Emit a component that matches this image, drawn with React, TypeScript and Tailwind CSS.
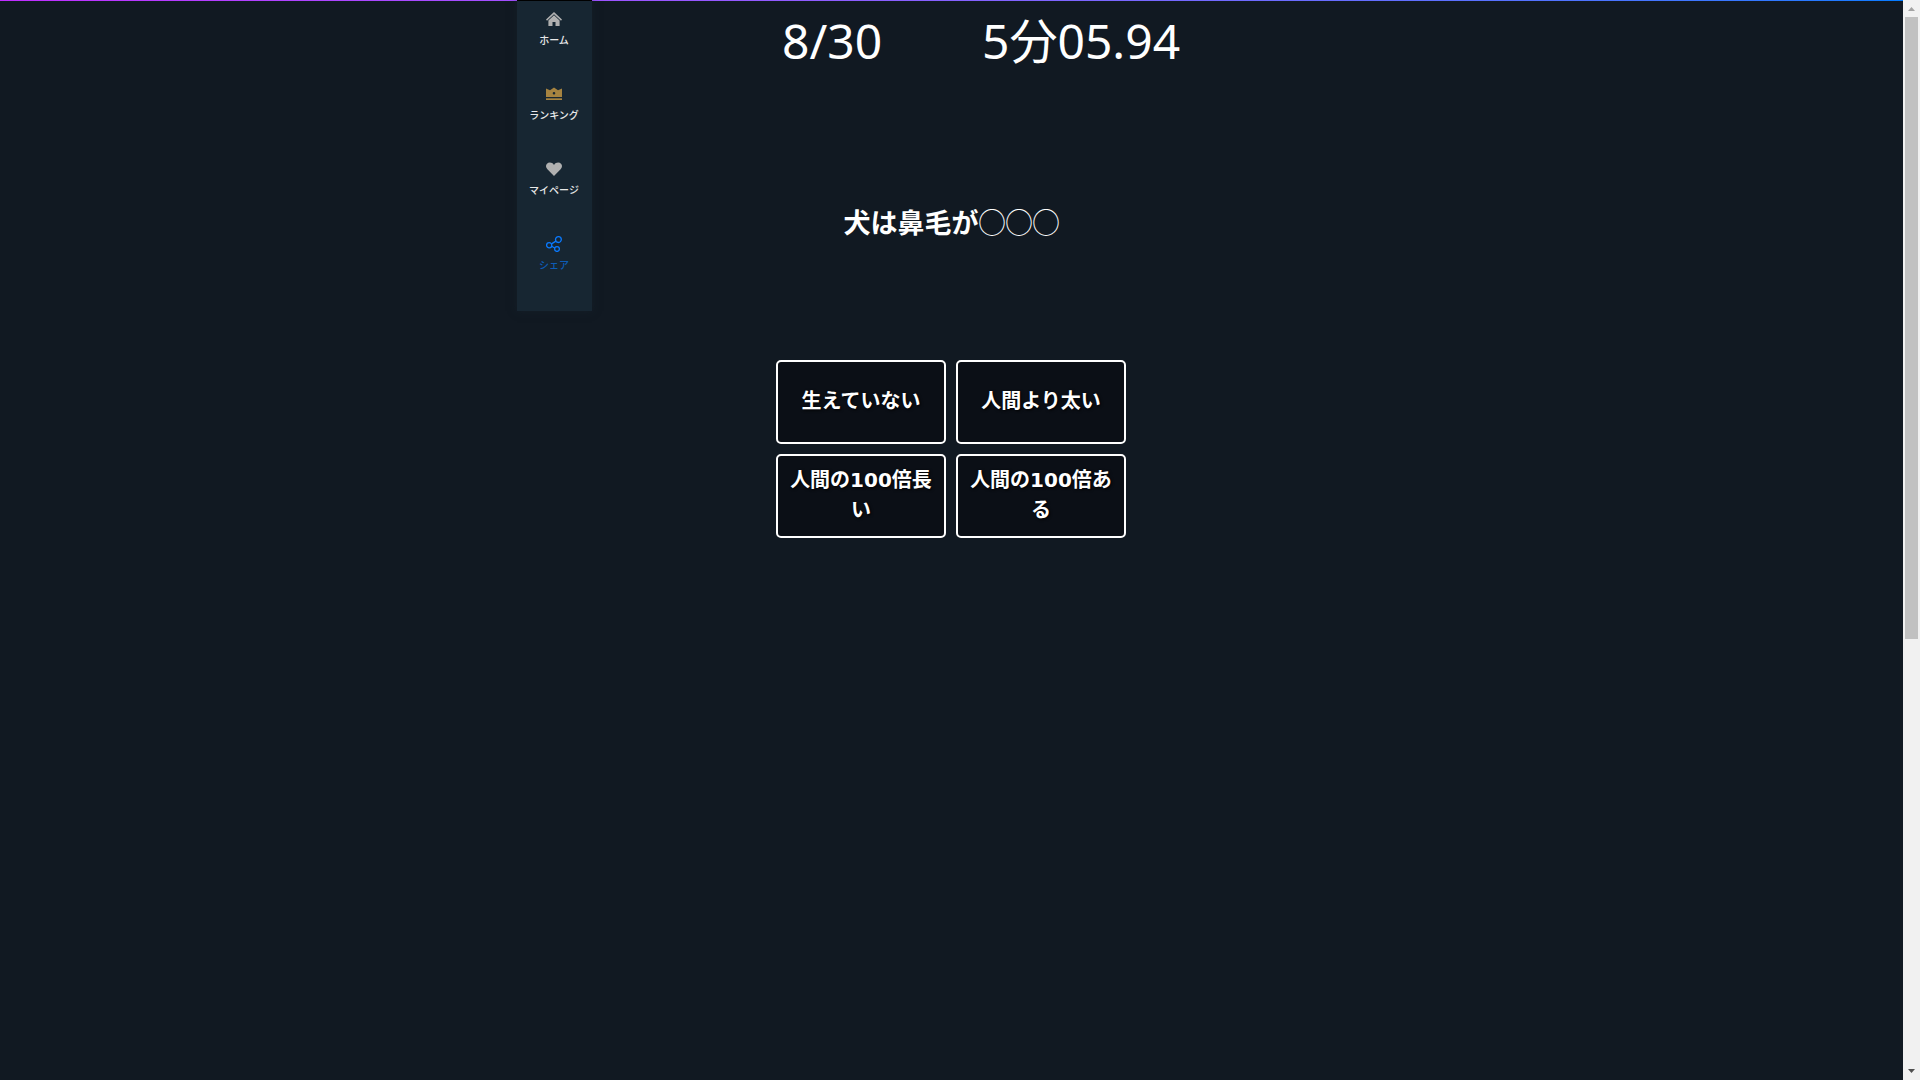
import React from "react";

interface MenuItem {
  label: string;
  href: string;
  color: string;
  icon: React.ReactNode;
}

const MENU: MenuItem[] = [
  {
    label: "ホーム",
    href: "#home",
    color: "text-[#e8e8e8]",
    icon: (
      <svg width="16" height="16" viewBox="0 0 16 16" fill="#b0b0b0">
        <path d="M8 1L16 8.6L15 9.7L8 3.2L1 9.7L0 8.6Z" />
        <path d="M8 4.2L13.6 9.4V15H9.5V11H6.5V15H2.4V9.4Z" />
      </svg>
    ),
  },
  {
    label: "ランキング",
    href: "#ranking",
    color: "text-[#e8e8e8]",
    icon: (
      <svg width="16" height="16" viewBox="0 0 16 16" fill="#a68340">
        <path
          fillRule="evenodd"
          d="M0 2.5L4 4.2L8 1.5L12 4.2L16 2.5V11H0ZM8 6A1.3 1.3 0 1 0 8 8.6A1.3 1.3 0 1 0 8 6Z"
        />
        <path d="M0 12.3H16V14H0Z" />
      </svg>
    ),
  },
  {
    label: "マイページ",
    href: "#mypage",
    color: "text-[#e8e8e8]",
    icon: (
      <svg width="16" height="16" viewBox="0 0 16 16" fill="#b0b0b0">
        <path d="M8 15L1.4 8.3C-.4 6.3-.4 4.1 1 2.7C2.8.9 6.3 1.2 8 4C9.7 1.2 13.2.9 15 2.7C16.4 4.1 16.4 6.3 14.6 8.3Z" />
      </svg>
    ),
  },
  {
    label: "シェア",
    href: "#share",
    color: "text-[#0d5cb6]",
    icon: (
      <svg width="16" height="16" viewBox="0 0 16 16" fill="none" stroke="#0a7aff" strokeWidth="1.3">
        <circle cx="3.2" cy="9.2" r="2.6" />
        <circle cx="12.4" cy="3.6" r="2.9" />
        <circle cx="11" cy="13" r="2.4" />
        <path d="M5.5 7.9L9.9 5.1M5.6 10.3L8.8 12" />
      </svg>
    ),
  },
];

const CHOICES = ["生えていない", "人間より太い", "人間の100倍長い", "人間の100倍ある"];

function SideMenu() {
  return (
    <nav className="h-[311px] border-t border-black bg-[#172632] shadow-[0_0_8px_rgba(24,37,48,0.5)]">
      {MENU.map((item) => (
        <a
          key={item.label}
          href={item.href}
          className={`flex h-[75px] flex-col items-center gap-[5px] pr-px pt-[10px] text-[10px] font-medium leading-[16px] ${item.color}`}
        >
          {item.icon}
          <span>{item.label}</span>
        </a>
      ))}
    </nav>
  );
}

function Quiz() {
  return (
    <main className="text-white">
      <div className="grid grid-cols-[200px_auto] justify-start pl-[190px] pt-[3px] text-5xl leading-[76px]">
        <span>8/30</span>
        <span>5分05.94</span>
      </div>
      <h1 className="mt-[124px] text-center text-[27px] font-bold leading-[40px]">
        犬は鼻毛が<span className="font-medium">◯◯◯</span>
      </h1>
      <div className="ml-[184px] mt-[117px] grid w-[350px] grid-cols-2 gap-[10px]">
        {CHOICES.map((choice) => (
          <button
            key={choice}
            type="button"
            className="h-[84px] rounded-[5px] border-2 border-white bg-[#0b0f16] px-2 pb-[2px] font-['DejaVu_Sans','Noto_Sans_CJK_JP',sans-serif] text-xl font-bold leading-[30px] [text-shadow:1px_1px_3px_#000]"
          >
            {choice}
          </button>
        ))}
      </div>
    </main>
  );
}

// classic always-visible scrollbar
function ScrollBar() {
  return (
    <div className="flex h-screen w-[17px] shrink-0 flex-col items-center justify-between bg-[#f1f1f1]">
      <svg width="17" height="17" viewBox="0 0 17 17" fill="#a3a3a3">
        <path d="M5 11L8.5 7L12 11Z" />
      </svg>
      <div className="w-[13px] flex-1">
        <div className="h-[59.5%] bg-[#c1c1c1]" />
      </div>
      <svg width="17" height="17" viewBox="0 0 17 17" fill="#505050">
        <path d="M5 6L8.5 10L12 6Z" />
      </svg>
    </div>
  );
}

export default function App() {
  return (
    <div className="flex min-h-screen bg-[#111922] font-['Noto_Sans','Noto_Sans_CJK_JP',sans-serif]">
      <div className="relative flex-1">
        <div className="absolute inset-x-0 top-0 h-px bg-linear-to-r from-[#bf2dff] to-[#007bff]" />
        <div className="relative mx-auto grid max-w-[869px] grid-cols-[75px_1fr_75px] items-start">
          <SideMenu />
          <Quiz />
        </div>
      </div>
      <ScrollBar />
    </div>
  );
}
